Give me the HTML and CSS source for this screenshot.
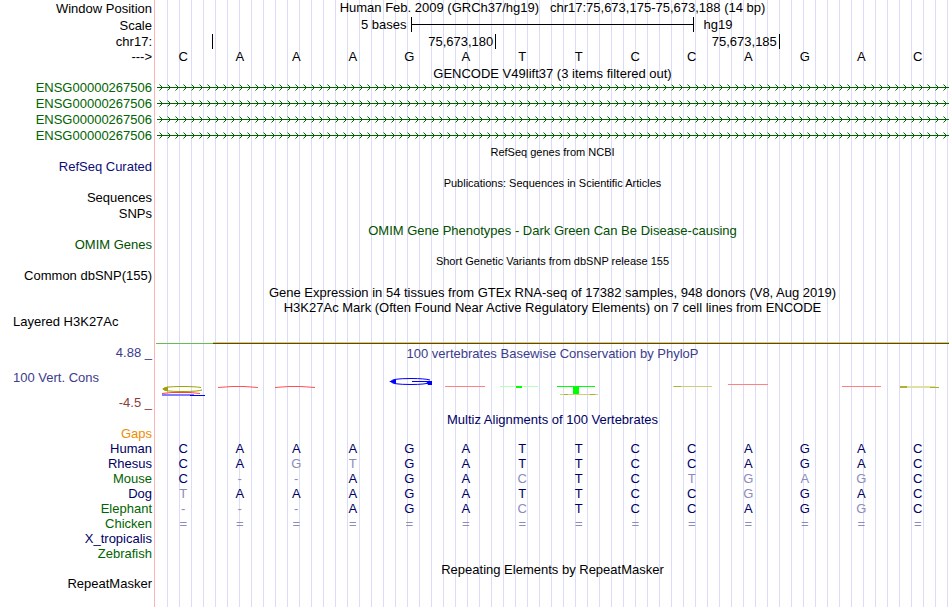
FILE: index.html
```
<!DOCTYPE html>
<html lang="en">
<head>
<meta charset="utf-8">
<title>Genome Browser - chr17:75,673,175-75,673,188</title>
<link rel="stylesheet" href="styles.css">
</head>
<body>
<main class="browser">
  <section class="ruler">
    <div class="row tall"><div class="label">Window Position</div><h1 class="caption">Human Feb. 2009 (GRCh37/hg19) &nbsp; chr17:75,673,175-75,673,188 (14 bp)</h1></div>
    <div class="row tall"><div class="label">Scale</div><div class="scale"><span class="scale-size">5 bases</span><span class="scale-bar"></span><span class="scale-db">hg19</span></div></div>
    <div class="row"><div class="label">chr17:</div><div class="ticks"><span class="tick first"></span><span class="tick">75,673,180</span><span class="tick">75,673,185</span></div></div>
    <div class="row"><div class="label">---&gt;</div><div class="bases"><span>C</span><span>A</span><span>A</span><span>A</span><span>G</span><span>A</span><span>T</span><span>T</span><span>C</span><span>C</span><span>A</span><span>G</span><span>A</span><span>C</span></div></div>
  </section>

  <section>
    <h2 class="title">GENCODE V49lift37 (3 items filtered out)</h2>
    <svg class="defs" width="0" height="0" aria-hidden="true"><defs><pattern id="strand" width="8" height="16" patternUnits="userSpaceOnUse"><path d="M2 4h1v1h-1zM2 10h1v1h-1z" fill="#80b080"/><path d="M3 5h1v1h-1zM4 6h1v1h-1zM0 7h8v1h-8zM4 8h1v1h-1zM3 9h1v1h-1z" fill="#006400"/></pattern></defs></svg>
    <div class="row item"><div class="label gene">ENSG00000267506</div><svg class="strand"><rect width="100%" height="16" fill="url(#strand)"/></svg></div>
    <div class="row item"><div class="label gene">ENSG00000267506</div><svg class="strand"><rect width="100%" height="16" fill="url(#strand)"/></svg></div>
    <div class="row item"><div class="label gene">ENSG00000267506</div><svg class="strand"><rect width="100%" height="16" fill="url(#strand)"/></svg></div>
    <div class="row item"><div class="label gene">ENSG00000267506</div><svg class="strand"><rect width="100%" height="16" fill="url(#strand)"/></svg></div>
  </section>

  <section>
    <h2 class="title small">RefSeq genes from NCBI</h2>
    <div class="row item"><div class="label refseq">RefSeq Curated</div></div>
  </section>
  <section>
    <h2 class="title small">Publications: Sequences in Scientific Articles</h2>
    <div class="row item"><div class="label">Sequences</div></div>
    <div class="row item"><div class="label">SNPs</div></div>
  </section>
  <section>
    <h2 class="title omim">OMIM Gene Phenotypes - Dark Green Can Be Disease-causing</h2>
    <div class="row item"><div class="label omim">OMIM Genes</div></div>
  </section>
  <section>
    <h2 class="title small">Short Genetic Variants from dbSNP release 155</h2>
    <div class="row item"><div class="label">Common dbSNP(155)</div></div>
  </section>
  <section>
    <h2 class="title">Gene Expression in 54 tissues from GTEx RNA-seq of 17382 samples, 948 donors (V8, Aug 2019)</h2>
  </section>
  <section>
    <h2 class="title">H3K27Ac Mark (Often Found Near Active Regulatory Elements) on 7 cell lines from ENCODE</h2>
    <div class="row"><div class="label wide">Layered H3K27Ac</div><div class="signal"><span class="signal-low"></span><span class="signal-high"></span></div></div>
  </section>

  <section class="row conservation">
    <div class="axis"><span class="label max">4.88 _</span><span class="label wide max">100 Vert. Cons</span><span class="label min">-4.5 _</span></div>
    <div>
      <h2 class="caption phylop max">100 vertebrates Basewise Conservation by PhyloP</h2>
      <svg class="logo" viewBox="155 360 795 49" preserveAspectRatio="none" aria-hidden="true">
        <g fill="none">
          <path d="M201 387.500Q195 386.500 182 386.500Q163 386.500 163 389Q163 391.500 182 391.500Q198 391.500 202 390" stroke="#a0a000"/>
          <path d="M162 389L168 386.500V391.500Z" fill="#a0a000"/>
          <path d="M162 393.500L172 392.500H190L200 393.500" stroke="#ff4040"/>
          <path d="M162 395H194" stroke="#8080ff" stroke-width="2"/><path d="M190 395.500H205" stroke="#0000ff"/>
          <path d="M218 387.500L232 386.500H244L258 387.500M275 387.500L289 386.500H301L315 387.500" stroke="#ff5050"/>
          <path d="M430 380Q425 378.500 411 378.500Q391 378.500 391 381.500Q391 384.500 411 384.500Q425 384.500 431 382.500M412 381.500H431" stroke="#0000ff"/>
          <path d="M389 381.500L396 379V384ZM426 381H432V385H428Z" fill="#0000ff"/>
          <path d="M445 386.500H485M842 386.500H881M728 384.500H768" stroke="#ff8080"/>
          <path d="M500 386.500H538" stroke="#b8ffb8"/><path d="M516 387H522" stroke="#00ff00" stroke-width="2"/>
          <path d="M557 386.500H595" stroke="#00ff00"/><path d="M576 386V394" stroke="#00ff00" stroke-width="6"/>
          <path d="M560 394.500H598M673 386.500H712" stroke="#d0cc78"/><path d="M564 394.500H568M590 394.500H595M674 386.500H681" stroke="#b0b030"/>
          <path d="M900 387H936" stroke="#e0e0a0" stroke-width="2"/><path d="M900 387H907" stroke="#b0b030" stroke-width="2"/><path d="M930 387.500H939" stroke="#b0b030"/>
        </g>
      </svg>
    </div>
  </section>

  <section>
    <h2 class="title align">Multiz Alignments of 100 Vertebrates</h2>
    <table class="multiz">
      <tbody>
      <tr><th class="gaps" scope="row">Gaps</th><td colspan="14"></td></tr>
      <tr><th scope="row">Human</th><td>C</td><td>A</td><td>A</td><td>A</td><td>G</td><td>A</td><td>T</td><td>T</td><td>C</td><td>C</td><td>A</td><td>G</td><td>A</td><td>C</td></tr>
      <tr><th scope="row">Rhesus</th><td>C</td><td>A</td><td class="d">G</td><td class="d">T</td><td>G</td><td>A</td><td>T</td><td>T</td><td>C</td><td>C</td><td>A</td><td>G</td><td>A</td><td>C</td></tr>
      <tr><th class="alt" scope="row">Mouse</th><td>C</td><td class="d">-</td><td class="d">-</td><td>A</td><td>G</td><td>A</td><td class="d">C</td><td>T</td><td>C</td><td class="d">T</td><td class="d">G</td><td class="d">A</td><td class="d">G</td><td>C</td></tr>
      <tr><th scope="row">Dog</th><td class="d">T</td><td>A</td><td>A</td><td>A</td><td>G</td><td>A</td><td>T</td><td>T</td><td>C</td><td>C</td><td class="d">G</td><td>G</td><td>A</td><td>C</td></tr>
      <tr><th class="alt" scope="row">Elephant</th><td class="d">-</td><td class="d">-</td><td class="d">-</td><td>A</td><td>G</td><td>A</td><td class="d">C</td><td>T</td><td>C</td><td>C</td><td>A</td><td>G</td><td class="d">G</td><td>C</td></tr>
      <tr class="d"><th class="alt" scope="row">Chicken</th><td>=</td><td>=</td><td>=</td><td>=</td><td>=</td><td>=</td><td>=</td><td>=</td><td>=</td><td>=</td><td>=</td><td>=</td><td>=</td><td>=</td></tr>
      <tr><th scope="row">X_tropicalis</th><td colspan="14"></td></tr>
      <tr><th class="alt" scope="row">Zebrafish</th><td colspan="14"></td></tr>
      </tbody>
    </table>
  </section>

  <section>
    <h2 class="title">Repeating Elements by RepeatMasker</h2>
    <div class="row item"><div class="label">RepeatMasker</div></div>
  </section>
</main>
</body>
</html>
```
FILE: styles.css
```
* { box-sizing: border-box; }
body {
  margin: 0;
  background: #fff;
  color: #000;
  font: 13px/15px "Liberation Sans", Arial, sans-serif;
}
.browser {
  min-height: 100vh;
  background:
    linear-gradient(#ffb4b4, #ffb4b4) 154px 0 / 1px 100% no-repeat,
    linear-gradient(#fff, #fff) 0 0 / 156px 100% no-repeat,
    linear-gradient(to right, #dcdcf8 1px, transparent 1px) 11px 0 / 12px 100% repeat-x;
}
h1, h2 { margin: 0; font-size: 13px; font-weight: normal; }
.row { display: grid; grid-template-columns: 155px minmax(0, 1fr); }
.tall { line-height: 17px; }
.item { line-height: 16px; }
.ruler { padding-bottom: 1px; }
.label { padding-right: 3px; text-align: right; }
.wide { padding-left: 13px; text-align: left; }
.caption { line-height: 15px; text-align: center; }
.title { height: 15px; padding-left: 155px; line-height: 17px; text-align: center; }
.small { font-size: 11px; }
.gene { color: #006400; }
.refseq { color: #0c0c78; }
.omim { color: #005000; }
.max { color: #3c3c8c; }
.min { color: #8c3c3c; }
.align { color: #000064; }

.scale { display: grid; grid-template-columns: 9fr 10fr 9fr; line-height: 15px; }
.scale-size { padding-right: 4px; text-align: right; }
.scale-bar {
  height: 15px;
  border: solid #000;
  border-width: 0 1px;
  background: linear-gradient(#000, #000) 0 7px / 100% 1px no-repeat;
}
.scale-db { padding-left: 9px; }
.ticks { display: grid; grid-template-columns: 1fr 5fr 5fr 3fr; padding-left: 1px; }
.tick { border-right: 1px solid #000; padding-right: 2px; text-align: right; }
.bases {
  display: grid;
  grid-template-columns: repeat(14, 1fr);
  padding-right: 4px;
  text-align: center;
}
.defs { display: block; }
.strand { display: block; width: calc(100% - 3px); height: 16px; margin-left: 2px; }

.signal { display: grid; grid-template-columns: 1fr 13fr; height: 31px; padding: 28px 1px 0; }
.signal-low { height: 2px; border-bottom: 1px solid #64be50; }
.signal-high { height: 2px; border-top: 1px solid #ffc040; border-bottom: 1px solid #405040; }

.conservation { padding-bottom: 1px; }
.phylop { height: 15px; line-height: 17px; }
.axis { display: flex; flex-direction: column; justify-content: space-between; height: 65px; }
.logo { display: block; width: 100%; height: 49px; }

.multiz {
  width: calc(100% - 4px);
  table-layout: fixed;
  border-collapse: collapse;
  color: #000064;
}
.multiz th { width: 155px; padding: 0 3px 0 0; font-weight: normal; text-align: right; color: #000064; }
.multiz td { padding: 0; text-align: center; }
.multiz .alt { color: #006400; }
.multiz .gaps { color: #f08c00; }
.d { color: #8c8cb8; }
```
